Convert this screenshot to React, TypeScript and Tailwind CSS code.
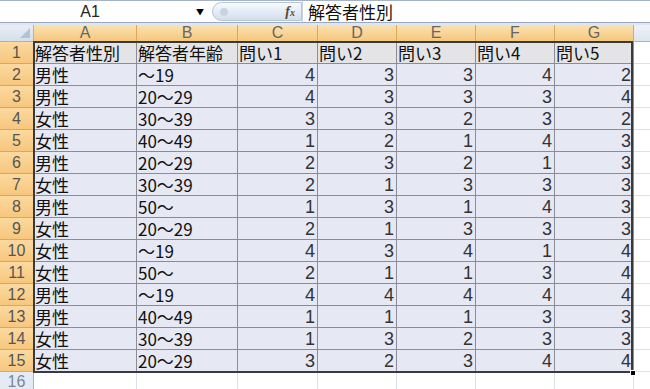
import React from "react";

const rows: (string | number)[][] = [
  ["解答者性別", "解答者年齢", "問い1", "問い2", "問い3", "問い4", "問い5"],
  ["男性", "～19", 4, 3, 3, 4, 2],
  ["男性", "20～29", 4, 3, 3, 3, 4],
  ["女性", "30～39", 3, 3, 2, 3, 2],
  ["女性", "40～49", 1, 2, 1, 4, 3],
  ["男性", "20～29", 2, 3, 2, 1, 3],
  ["女性", "30～39", 2, 1, 3, 3, 3],
  ["男性", "50～", 1, 3, 1, 4, 3],
  ["女性", "20～29", 2, 1, 3, 3, 3],
  ["女性", "～19", 4, 3, 4, 1, 4],
  ["女性", "50～", 2, 1, 1, 3, 4],
  ["男性", "～19", 4, 4, 4, 4, 4],
  ["男性", "40～49", 1, 1, 1, 3, 3],
  ["女性", "30～39", 1, 3, 2, 3, 3],
  ["女性", "20～29", 3, 2, 3, 4, 4],
];

const cols = ["A", "B", "C", "D", "E", "F", "G"];
const font = { fontFamily: '"Noto Sans CJK JP", "Liberation Sans", sans-serif' };
const latin = { fontFamily: '"Liberation Sans", sans-serif' };

export default function App() {
  return (
    <div className="w-[650px] h-[389px] overflow-hidden bg-white relative" style={font}>
      {/* formula bar */}
      <div className="h-[23px] flex items-stretch border-t border-[#a5b3c6] border-b border-b-[#9aa9bf] bg-white">
        <div className="w-[188px] flex items-center justify-center text-[16px] text-[#222] pr-[8px]" style={latin}>A1</div>
        <div className="w-[24px] flex items-center justify-center text-[8px] text-black">▼</div>
        <div className="w-[90px] my-[1px] flex items-center justify-end pr-[6px] rounded-l-full border border-[#b7c4d6] bg-gradient-to-b from-[#f8fbff] via-[#e4ecf7] to-[#d3deec] relative">
          <div className="absolute left-[7px] top-[5px] w-[8px] h-[8px] rounded-full bg-[#c8d4e2]" />
          <span className="italic font-bold text-[14px] text-[#5a4a2a]" style={{ fontFamily: '"Liberation Serif", serif' }}>f<span className="text-[10px]">x</span></span>
        </div>
        <div className="flex-1 flex items-center pl-[5px] text-[17px] leading-[20px] text-[#111] border-l border-[#c9d3e0]">解答者性別</div>
      </div>
      <div className="h-[2px] bg-[#dfe6f0]" />
      {/* grid */}
      <div className="relative grid grid-cols-[34px_103px_101px_80px_79px_79px_79px_79px_16px] grid-rows-[17px_repeat(16,22px)]">
        <div className="bg-gradient-to-b from-[#e9eef5] to-[#d6dfeb] border-r border-b border-[#9eb6ce] relative">
          <div className="absolute right-[3px] bottom-[3px] w-0 h-0 border-l-[10px] border-l-transparent border-b-[10px] border-b-[#b4c2d3]" />
        </div>
        {cols.map((c) => (
          <div key={c} className="bg-gradient-to-b from-[#fbe2b3] to-[#f6c77b] border-r border-b border-[#d9a85a] flex items-center justify-center text-[16px] text-[#666] leading-[16px]" style={latin}>{c}</div>
        ))}
        <div className="bg-gradient-to-b from-[#eef2f8] to-[#dde5f0] border-b border-[#9eb6ce]" />
        {rows.map((r, i) => (
          <React.Fragment key={i}>
            <div className="bg-gradient-to-b from-[#fbd99e] to-[#f7c77e] border-r border-b border-[#d9a85a] flex items-center justify-center text-[16px] leading-[18px] text-[#555]" style={latin}>{i + 1}</div>
            {r.map((v, j) => (
              <div
                key={j}
                className={`border-r border-b border-[#8a8d98] flex items-center text-[17px] leading-[20px] text-[#111] whitespace-nowrap ${i === 0 ? "bg-[#e4e4e6]" : "bg-[#e6e8f3]"} ${typeof v === "number" ? "justify-end pr-[2px]" : "justify-start pl-[1px]"}`}
              >
                <span className={typeof v === "number" ? "text-[18px] leading-[20px] text-[#333]" : ""} style={typeof v === "number" ? latin : undefined}>{v}</span>
              </div>
            ))}
            <div className="border-b border-[#dae1ec]" />
          </React.Fragment>
        ))}
        <div className="bg-[#e4ebf5] border-r border-[#9eb6ce] flex items-start pt-[2px] justify-center text-[16px] text-[#7a879a] leading-[16px]" style={latin}>16</div>
        {cols.map((c) => (
          <div key={c} className="border-r border-[#dae1ec]" />
        ))}
        <div />
        {/* selection border */}
        <div className="absolute left-[33px] top-[16px] w-[600px] h-[332px] border-2 border-[#3a3a3a] pointer-events-none" />
        <div className="absolute left-[630px] top-[345px] w-[6px] h-[6px] bg-black border border-white pointer-events-none" />
      </div>
    </div>
  );
}
